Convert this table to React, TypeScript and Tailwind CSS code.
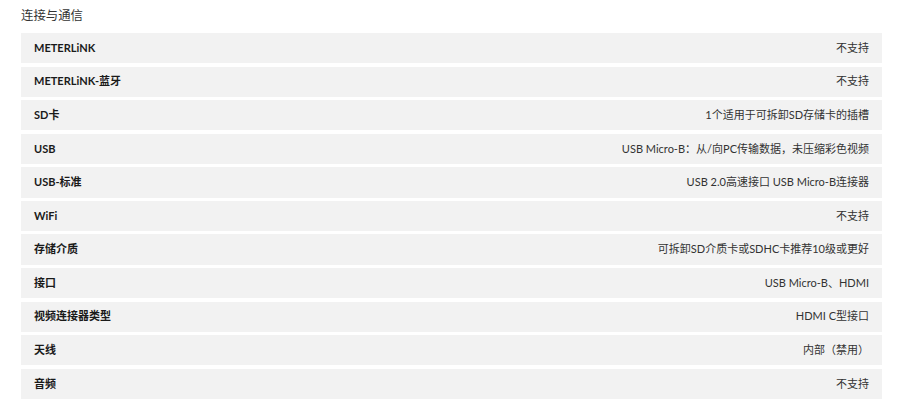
const rows: [string, string][] = [
  ["METERLiNK", "不支持"],
  ["METERLiNK-蓝牙", "不支持"],
  ["SD卡", "1个适用于可拆卸SD存储卡的插槽"],
  ["USB", "USB Micro-B：从/向PC传输数据，未压缩彩色视频"],
  ["USB-标准", "USB 2.0高速接口 USB Micro-B连接器"],
  ["WiFi", "不支持"],
  ["存储介质", "可拆卸SD介质卡或SDHC卡推荐10级或更好"],
  ["接口", "USB Micro-B、HDMI"],
  ["视频连接器类型", "HDMI C型接口"],
  ["天线", "内部（禁用）"],
  ["音频", "不支持"],
];

export default function App() {
  return (
    <div
      className="w-[900px] h-[412px] bg-white overflow-hidden pl-[21px] pr-[18px] pt-[8px]"
      style={{ fontFamily: '"Lato", "Noto Sans CJK SC", sans-serif' }}
    >
      <h2 className="text-[12.4px] leading-[16px] text-[#333] font-normal">连接与通信</h2>
      <div className="mt-[9px] flex flex-col gap-[3.4px]">
        {rows.map(([label, value]) => (
          <div
            key={label}
            className="h-[30.2px] bg-[#f2f2f2] flex items-center justify-between px-[13px] text-[11px]"
          >
            <span className="font-bold text-[#1a1a1a]">{label}</span>
            <span className="text-[#333]">{value}</span>
          </div>
        ))}
      </div>
    </div>
  );
}
